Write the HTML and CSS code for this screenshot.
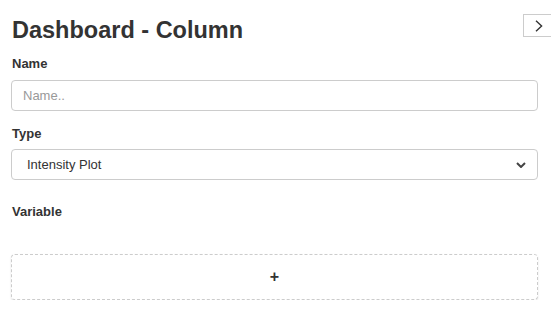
FILE: index.html
```html
<!DOCTYPE html>
<html>
<head>
<meta charset="utf-8">
<link rel="stylesheet" href="styles.css">
</head>
<body>
<div class="panel">
  <h1 class="title">Dashboard - Column</h1>
  <button class="toggle" type="button" aria-label="Collapse">
    <svg width="8" height="12" viewBox="0 0 8 12"><polyline points="1,0.8 6.6,6 1,11.2" fill="none" stroke="#333" stroke-width="1.4"/></svg>
  </button>
  <div class="group">
    <label class="label">Name</label>
    <input class="control input" type="text" placeholder="Name..">
  </div>
  <div class="group group-type">
    <label class="label">Type</label>
    <div class="control select">
      <span>Intensity Plot</span>
      <svg class="caret" width="10" height="6" viewBox="0 0 10 6"><polyline points="1,1 5,5 9,1" fill="none" stroke="#444" stroke-width="2"/></svg>
    </div>
  </div>
  <div class="group group-var">
    <label class="label">Variable</label>
  </div>
  <div class="add">+</div>
</div>
</body>
</html>
```

FILE: styles.css
```css
html, body {
  margin: 0;
  padding: 0;
  background: #fff;
}
body {
  font-family: "Liberation Sans", Arial, sans-serif;
  color: #333;
  overflow: hidden;
}
.panel {
  position: relative;
  padding: 16px 13px 0 11px;
}
.title {
  margin: 0 0 12px 1px;
  font-size: 23.5px;
  line-height: 28px;
  font-weight: bold;
  color: #333;
}
.toggle {
  position: absolute;
  top: 14px;
  left: 523px;
  width: 34px;
  height: 23px;
  padding: 0 0 0 11px;
  margin: 0;
  border: 1px solid #ccc;
  border-radius: 0;
  background: #fff;
  display: flex;
  align-items: center;
}
.group {
  display: flex;
  flex-direction: column;
  margin-bottom: 15px;
}
.group-type {
  margin-bottom: 24px;
}
.group-var {
  margin-bottom: 26px;
}
.label {
  display: block;
  font-size: 13px;
  line-height: 16px;
  font-weight: bold;
  margin: 0 0 8px 1px;
  color: #333;
}
.control {
  box-sizing: border-box;
  width: 100%;
  height: 31px;
  border: 1px solid #ccc;
  border-radius: 4px;
  background: #fff;
  font-family: "Liberation Sans", Arial, sans-serif;
  font-size: 13px;
  color: #333;
  margin: 0;
}
.group-type .label {
  margin-bottom: 7px;
}
.input {
  padding: 0 11px;
  outline: none;
}
.input::placeholder {
  color: #999;
}
.select {
  display: flex;
  align-items: center;
  justify-content: space-between;
  padding: 0 11px 0 15px;
}
.caret {
  display: block;
}
.add {
  box-sizing: border-box;
  height: 46px;
  border: 1px dashed #ccc;
  border-radius: 4px;
  box-shadow: 0 1px 2px rgba(0,0,0,0.12);
  display: flex;
  align-items: center;
  justify-content: center;
  font-size: 16px;
  font-weight: bold;
  color: #333;
}
```
